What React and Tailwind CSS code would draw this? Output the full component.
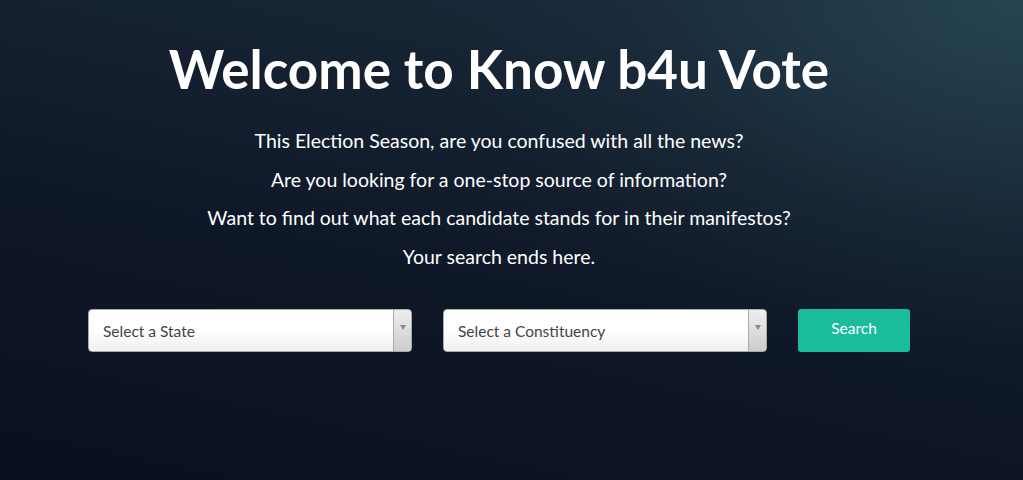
import { useState } from "react";

const states = ["Select a State", "Andhra Pradesh", "Bihar", "Delhi", "Karnataka", "Maharashtra", "Tamil Nadu", "Uttar Pradesh"];
const constituencies = ["Select a Constituency"];

function Select({ options, value, onChange }) {
  return (
    <div className="relative w-[324px] h-[43px] rounded-[4px] border border-[#aaa] bg-[linear-gradient(to_bottom,#ffffff_50%,#eeeeee)] shadow-[0_0_3px_#fff_inset]">
      <select
        value={value}
        onChange={(e) => onChange(e.target.value)}
        className="absolute inset-0 w-full h-full opacity-0 cursor-pointer"
      >
        {options.map((o) => (
          <option key={o}>{o}</option>
        ))}
      </select>
      <div className="flex h-full items-center pl-[14px] pt-[3px] text-[15.5px] text-[#444] pointer-events-none">
        {value}
      </div>
      {/* arrow box */}
      <div className="absolute right-0 top-0 bottom-0 w-[18px] border-l border-[#aaa] rounded-r-[4px] bg-[linear-gradient(to_bottom,#eeeeee,#cccccc)] flex justify-center pt-[15px] pointer-events-none">
        <div className="w-0 h-0 border-l-[3px] border-r-[3px] border-t-[5px] border-l-transparent border-r-transparent border-t-[#888]" />
      </div>
    </div>
  );
}

export default function App() {
  const [state, setState] = useState("Select a State");
  const [seat, setSeat] = useState("Select a Constituency");

  return (
    <div
      className="w-full h-[480px] overflow-hidden text-white bg-[radial-gradient(ellipse_70%_90%_at_100%_0%,rgba(40,72,84,0.85),rgba(30,50,64,0.3)_55%,transparent_80%),linear-gradient(192deg,#1c2d3d,#0f1828_55%,#0a0f1d)]"
      style={{ fontFamily: "Lato, 'Open Sans', sans-serif" }}
    >
      <div className="pr-[25px] flex flex-col items-center">
        <h1 className="mt-[36px] text-[53px] font-bold leading-[66px]">Welcome to Know b4u Vote</h1>

        <div className="mt-[27px] flex flex-col items-center gap-[15.5px] text-[19.5px] leading-[23px]">
          <p>This Election Season, are you confused with all the news?</p>
          <p>Are you looking for a one-stop source of information?</p>
          <p>Want to find out what each candidate stands for in their manifestos?</p>
          <p>Your search ends here.</p>
        </div>

        <div className="mt-[41px] flex items-center gap-[31px]">
          <Select options={states} value={state} onChange={setState} />
          <Select options={constituencies} value={seat} onChange={setSeat} />
          <button className="w-[112px] h-[43px] rounded-[3px] bg-[#1abc9c] text-[15.5px] text-white pb-[2px]">
            Search
          </button>
        </div>
      </div>
    </div>
  );
}
